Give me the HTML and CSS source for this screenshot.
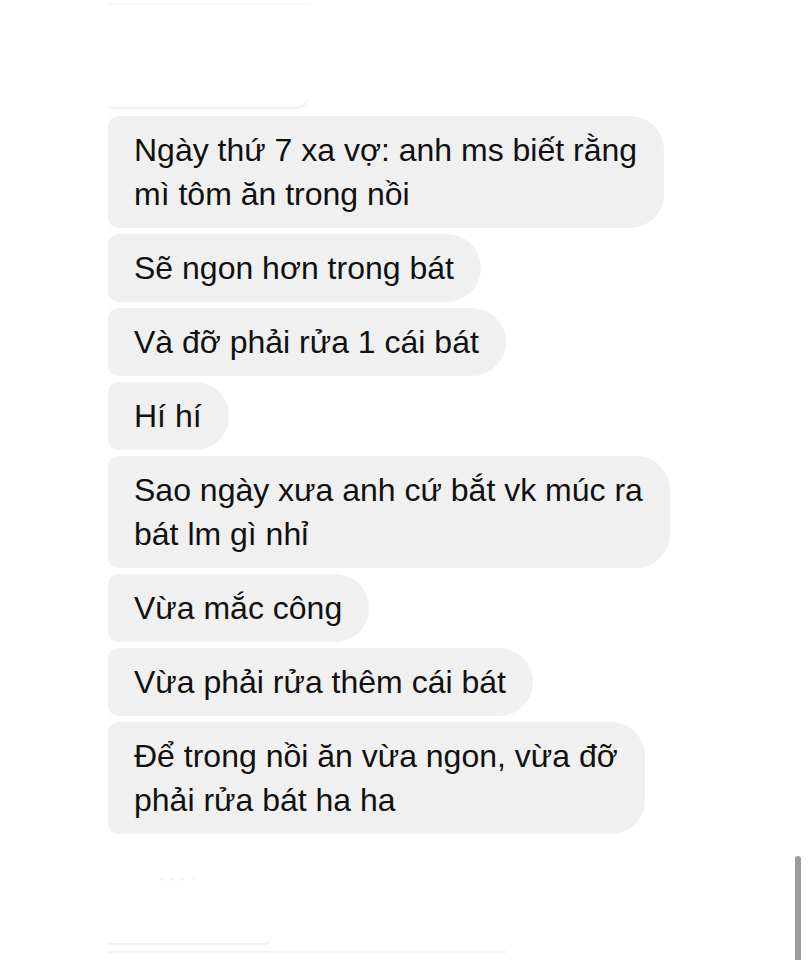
FILE: index.html
```html
<!DOCTYPE html>
<html lang="vi">
<head>
  <meta charset="UTF-8" />
  <meta name="viewport" content="width=device-width, initial-scale=1.0"/>
  <title>Tin nhắn</title>
  <link rel="stylesheet" href="styles.css">
</head>
<body>
  <div class="chat">
    <div class="ghost ghost-top"></div>
    <div class="ghost ghost-prev"></div>

    <div class="thread">
      <div class="bubble">Ngày thứ 7 xa vợ: anh ms biết rằng<br>mì tôm ăn trong nồi</div>
      <div class="bubble">Sẽ ngon hơn trong bát</div>
      <div class="bubble">Và đỡ phải rửa 1 cái bát</div>
      <div class="bubble">Hí hí</div>
      <div class="bubble">Sao ngày xưa anh cứ bắt vk múc ra<br>bát lm gì nhỉ</div>
      <div class="bubble">Vừa mắc công</div>
      <div class="bubble">Vừa phải rửa thêm cái bát</div>
      <div class="bubble">Để trong nồi ăn vừa ngon, vừa đỡ<br>phải rửa bát ha ha</div>
    </div>

    <div class="tail">
      <div class="ghost-dots">• • • •</div>
      <div class="ghost ghost-bottom"></div>
      <div class="ghost-line"></div>
    </div>

    <div class="scrollbar"></div>
  </div>
</body>
</html>
```

FILE: styles.css
```css
* {
  box-sizing: border-box;
}

html, body {
  margin: 0;
  background: #fff;
}

body {
  font-family: "Liberation Sans", Arial, sans-serif;
  color: #111;
  width: 808px;
  height: 960px;
  overflow: hidden;
}

.chat {
  position: relative;
  height: 960px;
  padding-left: 108px;
}

.ghost {
  width: 202px;
  background: #fff;
  border-radius: 8px 24px 24px 8px;
}

.ghost-top {
  height: 3px;
  box-shadow: 0 1px 2px #f4f4f4;
}

.ghost-prev {
  height: 30px;
  margin-top: 74px;
  box-shadow: 0 3px 2px -1px #efefef;
}

.thread {
  margin-top: 9px;
  display: flex;
  flex-direction: column;
  align-items: flex-start;
  gap: 6px;
}

.bubble {
  background: #f0f0f0;
  font-size: 32px;
  line-height: 44px;
  padding: 12px 27px 12px 26px;
  border-radius: 10px 34px 34px 10px;
  white-space: nowrap;
}

.tail {
  padding-top: 4px;
}

.ghost-dots {
  margin: 36px 0 0 52px;
  color: #f4f4f4;
  font-size: 10px;
  letter-spacing: 2px;
}

.ghost-bottom {
  width: 162px;
  height: 12px;
  margin-top: 46px;
  box-shadow: 0 2px 2px #f0f0f0;
}

.ghost-line {
  width: 398px;
  height: 2px;
  margin-top: 8px;
  background: #f2f2f2;
}

.scrollbar {
  position: absolute;
  left: 795px;
  top: 856px;
  width: 6px;
  height: 104px;
  background: #9b9b9b;
  border-radius: 3px 3px 0 0;
}
```
